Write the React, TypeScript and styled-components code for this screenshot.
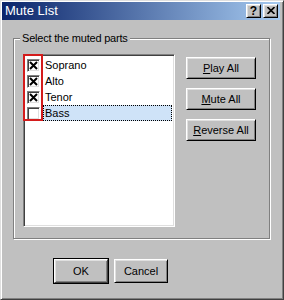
import React from "react";
import styled, { createGlobalStyle, css } from "styled-components";

const GlobalStyle = createGlobalStyle`
  html, body { margin: 0; padding: 0; background: #c0c0c0; }
  body { font-family: "Liberation Sans", Arial, sans-serif; font-size: 11px; }
  * { box-sizing: border-box; }
`;

const Window = styled.div`
  width: 284px;
  height: 300px;
  background: #c0c0c0;
  border: 1px solid;
  border-color: #dfdfdf #404040 #404040 #dfdfdf;
  box-shadow: inset 1px 1px 0 #fff, inset -1px -1px 0 #808080;
  padding: 1px 3px 1px 1px;
  display: flex;
  flex-direction: column;
`;

const TitleBar = styled.div`
  height: 18px;
  background: linear-gradient(to right, #0a246a, #a6caf0);
  display: flex;
  align-items: center;
  padding: 0 2px 0 3px;
  gap: 2px;
`;

const Title = styled.span`
  flex: 1;
  color: #fff;
  font-size: 13px;
  line-height: 18px;
`;

const bevel = css`
  background: #c0c0c0;
  border: 1px solid;
  border-color: #fff #000 #000 #fff;
  box-shadow: inset 1px 1px 0 #dfdfdf, inset -1px -1px 0 #808080;
`;

const CaptionButton = styled.div`
  ${bevel};
  width: 15px;
  height: 14px;
  display: flex;
  align-items: center;
  justify-content: center;
  font-weight: bold;
  font-size: 12px;
  color: #000;
  line-height: 1;
  padding-bottom: 1px;
`;

const Content = styled.div`
  flex: 1;
  display: flex;
  flex-direction: column;
  padding: 18px 0 0 11px;
`;

const GroupBox = styled.div`
  position: relative;
  width: 257px;
  height: 201px;
  border: 1px solid #808080;
  box-shadow: 1px 1px 0 #fff, inset 1px 1px 0 #fff;
  padding: 15px 0 0 9px;
  display: flex;
  align-items: flex-start;
  gap: 11px;
`;

const Legend = styled.span`
  position: absolute;
  top: -8px;
  left: 6px;
  padding: 0 2px 0 2px;
  background: #c0c0c0;
  line-height: 14px;
  color: #000;
  letter-spacing: -0.2px;
`;

const ListBox = styled.div`
  position: relative;
  width: 152px;
  height: 173px;
  background: #fff;
  border: 1px solid;
  border-color: #808080 #fff #fff #808080;
  box-shadow: inset 1px 1px 0 #404040, inset -1px -1px 0 #dfdfdf;
  padding: 2px;
  display: flex;
  flex-direction: column;
`;

const Row = styled.div`
  height: 16px;
  display: flex;
  align-items: center;
  padding-left: 1px;
  gap: 3px;
`;

const Check = styled.div`
  width: 13px;
  height: 13px;
  background: #fff;
  border: 1px solid;
  border-color: #808080 #fff #fff #808080;
  box-shadow: inset 1px 1px 0 #404040, inset -1px -1px 0 #dfdfdf;
  display: flex;
  align-items: center;
  justify-content: center;
  flex: none;
`;

const ItemLabel = styled.div<{ $focused?: boolean }>`
  flex: 1;
  height: 16px;
  line-height: 14px;
  padding-left: 1px;
  color: #000;
  border: 1px dotted ${(p) => (p.$focused ? "#000" : "transparent")};
  background: ${(p) => (p.$focused ? "#cfe3f8" : "transparent")};
`;

const Highlight = styled.div`
  position: absolute;
  left: -1px;
  top: -1px;
  width: 20px;
  height: 67px;
  border: 2px solid #d41c1c;
  pointer-events: none;
`;

const SideButtons = styled.div`
  display: flex;
  flex-direction: column;
  gap: 9px;
  margin-top: 3px;
`;

const Button = styled.div<{ $default?: boolean }>`
  ${bevel};
  width: 70px;
  height: 22px;
  display: flex;
  align-items: center;
  justify-content: center;
  color: #000;
  font-size: 11px;
  padding-bottom: 1px;
`;

const DialogButton = styled(Button)`
  width: 54px;
  height: 24px;
  ${(p) =>
    p.$default &&
    css`
      border-color: #fff #404040 #404040 #fff;
      box-shadow: 0 0 0 1px #000, inset 1px 1px 0 #dfdfdf, inset -1px -1px 0 #808080;
    `}
`;

const Footer = styled.div`
  display: flex;
  gap: 6px;
  padding: 20px 0 0 41px;
`;

const Key = styled.span`
  text-decoration: underline;
`;

const CheckMark = () => (
  <svg width="9" height="9" viewBox="0 0 9 9">
    <path d="M1 1 L8 8 M8 1 L1 8" stroke="#000" strokeWidth="2" />
  </svg>
);

const parts = [
  { name: "Soprano", checked: true },
  { name: "Alto", checked: true },
  { name: "Tenor", checked: true },
  { name: "Bass", checked: false, focused: true },
];

export default function App() {
  return (
    <>
      <GlobalStyle />
      <Window>
        <TitleBar>
          <Title>Mute List</Title>
          <CaptionButton>?</CaptionButton>
          <CaptionButton>
            <svg width="8" height="7" viewBox="0 0 8 7">
              <path d="M0.5 0 L7.5 7 M7.5 0 L0.5 7" stroke="#000" strokeWidth="1.6" />
            </svg>
          </CaptionButton>
        </TitleBar>
        <Content>
          <GroupBox>
            <Legend>Select the muted parts</Legend>
            <ListBox>
              {parts.map((p) => (
                <Row key={p.name}>
                  <Check>{p.checked && <CheckMark />}</Check>
                  <ItemLabel $focused={p.focused}>{p.name}</ItemLabel>
                </Row>
              ))}
              <Highlight />
            </ListBox>
            <SideButtons>
              <Button>
                <Key>P</Key>lay All
              </Button>
              <Button>
                <Key>M</Key>ute All
              </Button>
              <Button>
                <Key>R</Key>everse All
              </Button>
            </SideButtons>
          </GroupBox>
          <Footer>
            <DialogButton $default>OK</DialogButton>
            <DialogButton>Cancel</DialogButton>
          </Footer>
        </Content>
      </Window>
    </>
  );
}
